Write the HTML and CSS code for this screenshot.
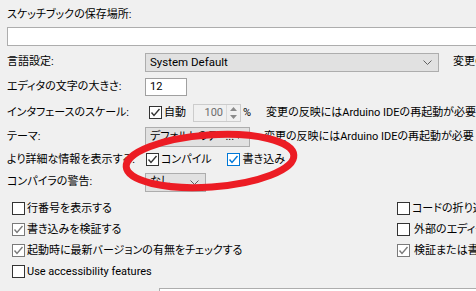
FILE: index.html
```html
<!DOCTYPE html>
<html lang="ja">
<head>
<meta charset="UTF-8" />
<title>環境設定</title>
<link rel="stylesheet" href="styles.css">
</head>
<body>

<div class="sketchbook-label">スケッチブックの保存場所:</div>
<div class="path-field"></div>

<div class="settings">
  <div class="lbl">言語設定:</div>
  <div class="field">
    <div class="select lang">System Default<svg class="chev" width="9" height="5" viewBox="0 0 9 5"><polyline points="0.5,0.5 4.5,4.5 8.5,0.5"/></svg></div>
    <span class="note gap-14">変更の反映にはArduino IDEの再起動が必要</span>
  </div>

  <div class="lbl">エディタの文字の大きさ:</div>
  <div class="field">
    <div class="textbox size">12</div>
  </div>

  <div class="lbl">インタフェースのスケール:</div>
  <div class="field">
    <span class="cb checked auto-cb"><svg width="11" height="11" viewBox="0 0 11 11"><polyline points="1.5,5.5 4,8.5 9.5,2"/></svg></span>
    <span class="cb-text">自動</span>
    <div class="spinner">
      <span class="spin-value">100</span>
      <span class="spin-btns">
        <svg width="7" height="4" viewBox="0 0 7 4"><polygon points="0,4 3.5,0 7,4"/></svg>
        <svg width="7" height="4" viewBox="0 0 7 4"><polygon points="0,0 3.5,4 7,0"/></svg>
      </span>
    </div>
    <span class="pct">%</span>
    <span class="note gap-15">変更の反映にはArduino IDEの再起動が必要</span>
  </div>

  <div class="lbl">テーマ:</div>
  <div class="field">
    <div class="select theme"><span>デフォルトのテ</span><span class="dots">...</span><svg class="chev" width="9" height="5" viewBox="0 0 9 5"><polyline points="0.5,0.5 4.5,4.5 8.5,0.5"/></svg></div>
    <span class="note gap-14">変更の反映にはArduino IDEの再起動が必要</span>
  </div>

  <div class="lbl">より詳細な情報を表示する:</div>
  <div class="field">
    <span class="cb checked verbose-cb"><svg width="11" height="11" viewBox="0 0 11 11"><polyline points="1.5,5.5 4,8.5 9.5,2"/></svg></span>
    <span class="cb-text">コンパイル</span>
    <span class="cb checked focus upload-cb"><svg width="11" height="11" viewBox="0 0 11 11"><polyline points="1.5,5.5 4,8.5 9.5,2"/></svg></span>
    <span class="cb-text">書き込み</span>
  </div>

  <div class="lbl">コンパイラの警告:</div>
  <div class="field">
    <div class="select warn">なし<svg class="chev" width="9" height="5" viewBox="0 0 9 5"><polyline points="0.5,0.5 4.5,4.5 8.5,0.5"/></svg></div>
  </div>
</div>

<div class="checks">
  <div class="check-col left">
    <label class="check-row"><span class="cb"></span><span class="cb-text">行番号を表示する</span></label>
    <label class="check-row"><span class="cb checked soft"><svg width="11" height="11" viewBox="0 0 11 11"><polyline points="1.5,5.5 4,8.5 9.5,2"/></svg></span><span class="cb-text">書き込みを検証する</span></label>
    <label class="check-row"><span class="cb checked soft"><svg width="11" height="11" viewBox="0 0 11 11"><polyline points="1.5,5.5 4,8.5 9.5,2"/></svg></span><span class="cb-text">起動時に最新バージョンの有無をチェックする</span></label>
    <label class="check-row"><span class="cb"></span><span class="cb-text">Use accessibility features</span></label>
  </div>
  <div class="check-col right">
    <label class="check-row"><span class="cb"></span><span class="cb-text">コードの折り返しを有効に</span></label>
    <label class="check-row"><span class="cb"></span><span class="cb-text wide-gap">外部のエディタを使用する</span></label>
    <label class="check-row"><span class="cb checked soft"><svg width="11" height="11" viewBox="0 0 11 11"><polyline points="1.5,5.5 4,8.5 9.5,2"/></svg></span><span class="cb-text wide-gap">検証または書き込みの前に保存する</span></label>
  </div>
</div>

<div class="bottom-field"></div>

<!-- red marker drawn over the screenshot -->
<svg class="marker" width="476" height="291" viewBox="0 0 476 291">
  <ellipse cx="210" cy="161" rx="84" ry="26" transform="rotate(-4 210 161)"/>
</svg>

</body>
</html>
```

FILE: styles.css
```css
* {
  box-sizing: border-box;
}

body {
  margin: 0;
  width: 476px;
  height: 291px;
  overflow: hidden;
  position: relative;
  background: #f0f0f0;
  color: #000;
  font-family: Roboto, "Noto Sans CJK JP", sans-serif;
  font-size: 11px;
  line-height: 16px;
  font-feature-settings: "palt";
}

.sketchbook-label {
  padding: 7px 0 0 7px;
}

.path-field {
  margin: 4px 0 0 7px;
  width: 520px;
  height: 19px;
  background: #fff;
  border: 1px solid #adadad;
}

.settings {
  display: grid;
  grid-template-columns: 138px auto;
  grid-template-rows: 24px 26px 25px 23px 23px 22px;
  align-items: center;
  margin-top: 4px;
  padding-left: 7px;
}

.lbl,
.field {
  white-space: nowrap;
}

.field {
  display: flex;
  align-items: center;
}

.select {
  display: flex;
  align-items: center;
  border: 1px solid #adadad;
  background: #e1e1e1;
  padding: 0 6px 0 4px;
}

.select .chev {
  margin-left: auto;
  fill: none;
  stroke: #606060;
  stroke-width: 1;
}

.select.lang {
  width: 294px;
  height: 19px;
  font-size: 11.5px;
}

.select.theme {
  width: 105px;
  height: 20px;
  overflow: hidden;
}

.select.theme .dots {
  margin-left: 8px;
}

.select.warn {
  width: 61px;
  height: 19px;
}

.textbox.size {
  width: 42px;
  height: 18px;
  background: #fff;
  border: 1px solid #a0a0a0;
  padding-left: 4px;
  line-height: 16px;
}

.note {
  white-space: nowrap;
}

.gap-14 {
  margin-left: 14px;
}

.gap-15 {
  margin-left: 15px;
}

/* checkboxes */
.cb {
  flex: none;
  display: inline-flex;
  align-items: center;
  justify-content: center;
  width: 13px;
  height: 13px;
  border: 1px solid #333;
  background: #fff;
}

.cb svg {
  fill: none;
  stroke: #333;
  stroke-width: 1.4;
}

.cb.soft {
  border-color: #7a7a7a;
}

.cb.soft svg {
  stroke: #7a7a7a;
}

.cb.focus {
  border-color: #0078d7;
}

.cb.focus svg {
  stroke: #0078d7;
}

.cb-text {
  margin-left: 2px;
  white-space: nowrap;
}

.auto-cb {
  margin-left: 4px;
}

.verbose-cb {
  margin-left: 1px;
}

.upload-cb {
  margin-left: 15px;
}

.upload-cb + .cb-text {
  margin-left: 3px;
}

.spinner {
  display: flex;
  align-items: center;
  margin-left: 7px;
  width: 48px;
  height: 18px;
  border: 1px solid #cccccc;
  background: #f0f0f0;
}

.spin-value {
  flex: 1;
  text-align: right;
  padding-right: 3px;
  color: #6d6d6d;
}

.spin-btns {
  display: flex;
  flex-direction: column;
  align-items: center;
  justify-content: space-around;
  width: 14px;
  height: 16px;
  border-left: 1px solid #dadada;
}

.spin-btns svg {
  fill: #8a8a8a;
}

.pct {
  margin-left: 2px;
}

/* checkbox list */
.checks {
  display: flex;
  margin-top: 5px;
}

.check-col.left {
  flex: none;
  width: 397px;
  padding-left: 12px;
}

.check-col.right {
  flex: none;
  white-space: nowrap;
}

.check-row {
  display: flex;
  align-items: center;
  height: 21px;
}

.cb-text.wide-gap {
  margin-left: 4px;
}

.bottom-field {
  margin: 6px 0 0 159px;
  width: 400px;
  height: 20px;
  background: #fff;
  border: 1px solid #adadad;
}

.marker {
  position: absolute;
  left: 0;
  top: 0;
  pointer-events: none;
}

.marker ellipse {
  fill: none;
  stroke: #ec1c24;
  stroke-width: 7;
}
```
